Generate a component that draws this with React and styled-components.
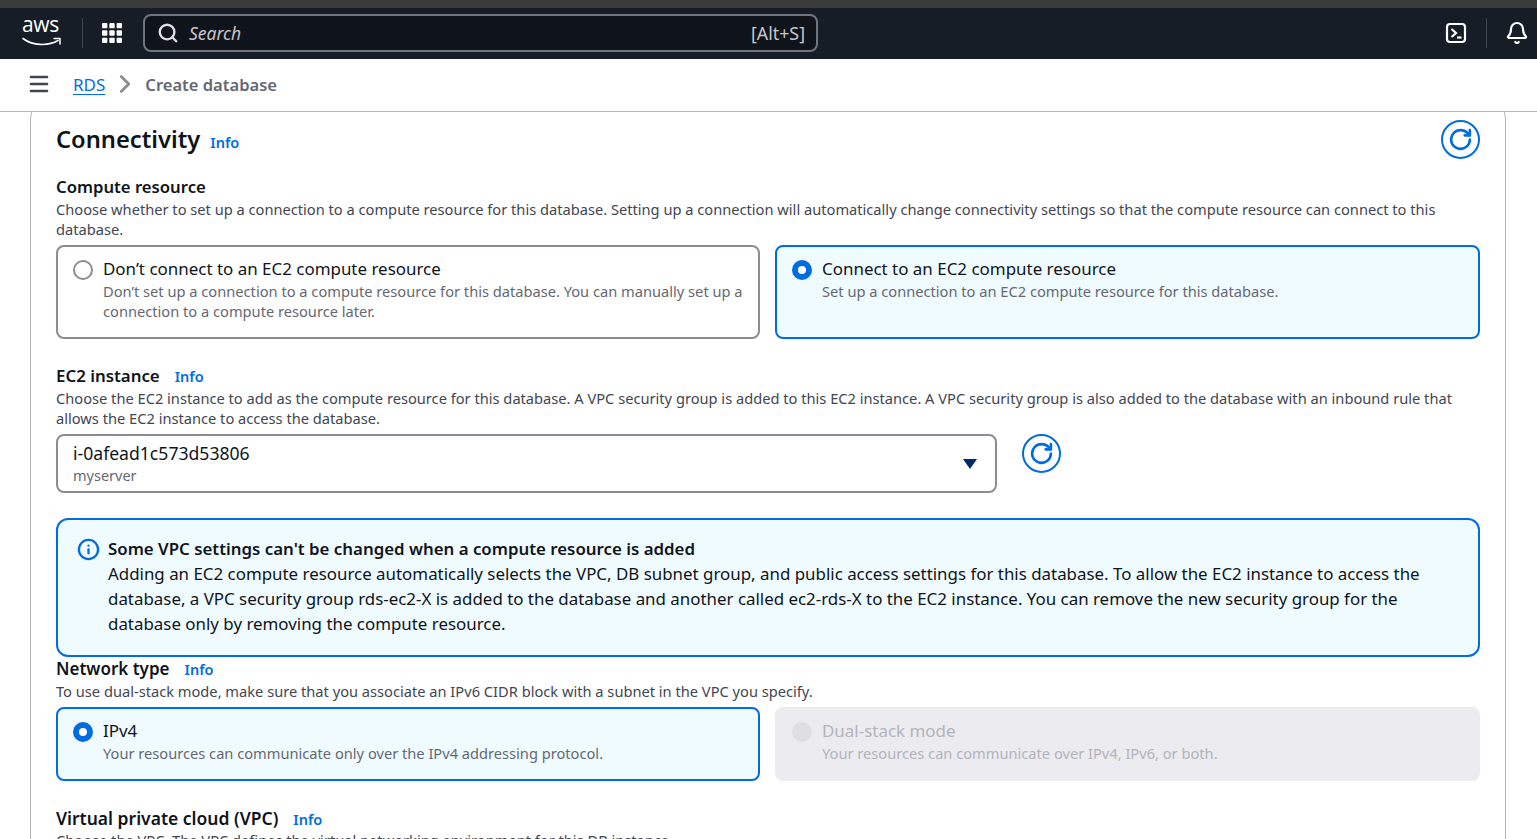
import React from "react";
import styled, { createGlobalStyle } from "styled-components";
import { Search, Menu, ChevronRight, RotateCw, Bell, Info } from "lucide-react";

const GlobalStyle = createGlobalStyle`
    html, body {
        margin: 0;
        padding: 0;
        height: 100%;
        overflow: hidden;
        background: #ffffff;
        font-family: "Noto Sans", "Open Sans", sans-serif;
        color: #0f141a;
    }
    * {
        box-sizing: border-box;
    }
`;

const Page = styled.div`
    height: 839px;
    display: flex;
    flex-direction: column;
    overflow: hidden;
`;

const TopStrip = styled.div`
    height: 8px;
    background: #3b3b3c;
    flex-shrink: 0;
`;

const Nav = styled.header`
    height: 51px;
    flex-shrink: 0;
    background: #161d26;
    display: flex;
    align-items: center;
    padding: 0 8px 2px 22px;
`;

const LogoBox = styled.div`
    width: 39px;
    height: 32px;
    position: relative;
    flex-shrink: 0;
`;

const LogoText = styled.span`
    display: block;
    color: #ffffff;
    font-family: "Open Sans", sans-serif;
    font-size: 21px;
    line-height: 21px;
    letter-spacing: -0.4px;
    margin-top: -3px;
`;

const LogoSmile = styled.svg`
    position: absolute;
    left: 0;
    top: 20px;
`;

const NavDivider = styled.div`
    width: 1px;
    height: 30px;
    background: #424650;
    flex-shrink: 0;
    margin: ${({ $margin }) => $margin};
`;

const GridIcon = styled.svg`
    flex-shrink: 0;
    margin-right: 21px;
`;

const SearchBox = styled.div`
    width: 675px;
    height: 38px;
    border: 2px solid #72747e;
    border-radius: 8px;
    background: #0f141a;
    display: flex;
    align-items: center;
    padding: 0 11px 0 12px;
    color: #c6c6cd;
    font-size: 17.5px;
    gap: 10px;
`;

const SearchHint = styled.span`
    font-style: italic;
    flex: 1;
`;

const SearchKeys = styled.span`
    font-size: 17.8px;
`;

const NavRight = styled.div`
    margin-left: auto;
    display: flex;
    align-items: center;
`;

const Crumbs = styled.div`
    height: 53px;
    flex-shrink: 0;
    background: #ffffff;
    border-bottom: 1px solid #b4b4bb;
    display: flex;
    align-items: center;
    padding: 0 0 2px 27px;
    font-size: 17px;
    position: relative;
    z-index: 1;
    color: #424650;
`;

const CrumbLink = styled.a`
    color: #006ce0;
    margin-left: 22px;
    text-decoration: underline;
    text-underline-offset: 3px;
`;

const CrumbCurrent = styled.span`
    color: #656871;
    font-weight: 600;
    font-size: 16.55px;
`;

const CrumbArrow = styled.span`
    display: flex;
    margin: 0 5px;
    color: #8c8c94;
`;

const Main = styled.main`
    flex: 1;
    overflow: hidden;
    padding: 0 31px 0 30px;
`;

const Card = styled.section`
    margin-top: -10px;
    border: 1px solid #b4b4bb;
    border-radius: 16px;
    padding: 0 25px;
    height: 800px;
`;

const TitleRow = styled.div`
    display: flex;
    align-items: center;
    height: 49px;
    margin-top: 12px;
    justify-content: space-between;
`;

const TitleGroup = styled.div`
    display: flex;
    align-items: baseline;
    gap: 10px;
    padding-bottom: 2px;
`;

const Title = styled.h2`
    margin: 0;
    font-size: 23.7px;
    line-height: 30px;
    font-weight: 600;
    color: #0f141a;
`;

const InfoLink = styled.a`
    color: #006ce0;
    font-size: 14.5px;
    font-weight: 600;
    line-height: 20px;
    margin-left: ${({ $gap }) => $gap || "0"};
`;

const RoundButton = styled.button`
    width: 39px;
    height: 39px;
    border: 2px solid #006ce0;
    border-radius: 50%;
    background: #ffffff;
    color: #006ce0;
    display: flex;
    align-items: center;
    justify-content: center;
    padding: 0 1px 0 0;
    flex-shrink: 0;
`;

const Field = styled.div`
    margin-top: ${({ $top }) => $top};
`;

const Label = styled.div`
    font-size: ${({ $size }) => $size || "16.7px"};
    line-height: 22px;
    font-weight: 600;
    color: #0f141a;
`;

const Description = styled.p`
    margin: 1px 0 0;
    font-size: 14.65px;
    line-height: 20px;
    color: #424650;
`;

const TileRow = styled.div`
    display: grid;
    grid-template-columns: 704px 705px;
    gap: 15px;
    margin-top: 6px;
`;

const Tile = styled.div`
    height: ${({ $height }) => $height};
    border-radius: 8px;
    border: 2px solid
        ${({ $state }) =>
            $state === "on" ? "#006ce0" : $state === "off" ? "#8c8c94" : "#ebebf0"};
    background: ${({ $state }) =>
        $state === "on" ? "#f0fbff" : $state === "off" ? "#ffffff" : "#ebebf0"};
    display: flex;
    gap: 10px;
    padding: 11px 15px;
`;

const Radio = styled.span`
    width: 20px;
    height: 20px;
    border-radius: 50%;
    flex-shrink: 0;
    margin-top: 2px;
    border: ${({ $state }) =>
        $state === "on"
            ? "6px solid #006ce0"
            : $state === "off"
              ? "2px solid #8c8c94"
              : "none"};
    background: ${({ $state }) => ($state === "disabled" ? "#dedee3" : "#ffffff")};
`;

const TileTitle = styled.div`
    font-size: 16.95px;
    line-height: 22px;
    color: ${({ $disabled }) => ($disabled ? "#b4b4bb" : "#0f141a")};
`;

const TileText = styled.div`
    font-size: 14.65px;
    line-height: 20px;
    margin-top: 1px;
    color: ${({ $disabled }) => ($disabled ? "#b4b4bb" : "#656871")};
`;

const SelectRow = styled.div`
    display: flex;
    gap: 25px;
    margin-top: 6px;
`;

const Select = styled.div`
    width: 941px;
    height: 59px;
    border: 2px solid #8c8c94;
    border-radius: 8px;
    padding: 5px 15px 0;
    position: relative;
`;

const SelectValue = styled.div`
    font-size: 17.6px;
    line-height: 24px;
    color: #0f141a;
`;

const SelectSub = styled.div`
    font-size: 14.5px;
    line-height: 20px;
    color: #656871;
`;

const Caret = styled.span`
    position: absolute;
    right: 18px;
    top: 23px;
    width: 0;
    height: 0;
    border-left: 7px solid transparent;
    border-right: 7px solid transparent;
    border-top: 10px solid #002a66;
`;

const Alert = styled.div`
    margin-top: 25px;
    height: 139px;
    border: 2px solid #006ce0;
    border-radius: 12px;
    background: #f0fbff;
    display: flex;
    gap: 8px;
    padding: 16px 19px;
    color: #0f141a;
`;

const AlertIcon = styled.span`
    display: flex;
    color: #006ce0;
    margin-top: 2px;
    height: 23px;
`;

const AlertTitle = styled.div`
    font-size: 16.85px;
    line-height: 25px;
    font-weight: 600;
`;

const AlertBody = styled.div`
    font-size: 16.9px;
    line-height: 25px;
`;

function AwsLogo() {
    return (
        <LogoBox>
            <LogoText>aws</LogoText>
            <LogoSmile width="39" height="11" viewBox="0 0 39 11" fill="none">
                <path
                    d="M1 1.5C10 8.5 26 9.5 36 3.5"
                    stroke="#ffffff"
                    strokeWidth="1.6"
                    strokeLinecap="round"
                />
                <path
                    d="M32 1.5H38V7"
                    stroke="#ffffff"
                    strokeWidth="1.5"
                    strokeLinecap="round"
                    strokeLinejoin="round"
                />
            </LogoSmile>
        </LogoBox>
    );
}

function AppsGrid() {
    const cells = [];
    for (let row = 0; row < 3; row++) {
        for (let col = 0; col < 3; col++) {
            cells.push(
                <rect
                    key={`${row}-${col}`}
                    x={col * 7.5}
                    y={row * 7.5}
                    width="5.5"
                    height="5.5"
                    rx="1"
                    fill="#ffffff"
                />,
            );
        }
    }
    return (
        <GridIcon width="20" height="20" viewBox="0 0 20.5 20.5">
            {cells}
        </GridIcon>
    );
}

function ShellIcon() {
    return (
        <svg width="22" height="22" viewBox="0 0 22 22" fill="none" stroke="#ffffff">
            <rect x="2" y="2" width="18" height="18" rx="3" strokeWidth="2.2" />
            <path d="M6.5 7L11 11L6.5 15" strokeWidth="2.2" />
            <path d="M12 15.5H16.5" strokeWidth="2.2" />
        </svg>
    );
}

function App() {
    return (
        <>
            <GlobalStyle />
            <Page>
                <TopStrip />
                <Nav>
                    <AwsLogo />
                    <NavDivider $margin="0 19px 0 21px" />
                    <AppsGrid />
                    <SearchBox>
                        <Search size={22} strokeWidth={2.6} color="#dedee3" />
                        <SearchHint>Search</SearchHint>
                        <SearchKeys>[Alt+S]</SearchKeys>
                    </SearchBox>
                    <NavRight>
                        <ShellIcon />
                        <NavDivider $margin="0 18px 0 19px" />
                        <Bell size={24} strokeWidth={2.2} color="#ffffff" />
                    </NavRight>
                </Nav>
                <Crumbs>
                    <Menu size={24} strokeWidth={2.6} color="#424650" />
                    <CrumbLink>RDS</CrumbLink>
                    <CrumbArrow>
                        <ChevronRight size={30} strokeWidth={2.2} />
                    </CrumbArrow>
                    <CrumbCurrent>Create database</CrumbCurrent>
                </Crumbs>
                <Main>
                    <Card>
                        <TitleRow>
                            <TitleGroup>
                                <Title>Connectivity</Title>
                                <InfoLink>Info</InfoLink>
                            </TitleGroup>
                            <RoundButton>
                                <RotateCw size={25} strokeWidth={2.5} />
                            </RoundButton>
                        </TitleRow>

                        <Field $top="12px">
                            <Label>Compute resource</Label>
                            <Description>
                                Choose whether to set up a connection to a compute resource for this
                                database. Setting up a connection will automatically change
                                connectivity settings so that the compute resource can connect to
                                this database.
                            </Description>
                            <TileRow>
                                <Tile $state="off" $height="94px">
                                    <Radio $state="off" />
                                    <div>
                                        <TileTitle>Don’t connect to an EC2 compute resource</TileTitle>
                                        <TileText>
                                            Don’t set up a connection to a compute resource for this
                                            database. You can manually set up a connection to a
                                            compute resource later.
                                        </TileText>
                                    </div>
                                </Tile>
                                <Tile $state="on" $height="94px">
                                    <Radio $state="on" />
                                    <div>
                                        <TileTitle>Connect to an EC2 compute resource</TileTitle>
                                        <TileText>
                                            Set up a connection to an EC2 compute resource for this
                                            database.
                                        </TileText>
                                    </div>
                                </Tile>
                            </TileRow>
                        </Field>

                        <Field $top="26px">
                            <Label $size="16.85px">
                                EC2 instance
                                <InfoLink $gap="15px">Info</InfoLink>
                            </Label>
                            <Description>
                                Choose the EC2 instance to add as the compute resource for this
                                database. A VPC security group is added to this EC2 instance. A VPC
                                security group is also added to the database with an inbound rule
                                that allows the EC2 instance to access the database.
                            </Description>
                            <SelectRow>
                                <Select>
                                    <SelectValue>i-0afead1c573d53806</SelectValue>
                                    <SelectSub>myserver</SelectSub>
                                    <Caret />
                                </Select>
                                <RoundButton>
                                    <RotateCw size={25} strokeWidth={2.5} />
                                </RoundButton>
                            </SelectRow>
                        </Field>

                        <Alert>
                            <AlertIcon>
                                <Info size={23} strokeWidth={2.4} />
                            </AlertIcon>
                            <div>
                                <AlertTitle>
                                    Some VPC settings can't be changed when a compute resource is added
                                </AlertTitle>
                                <AlertBody>
                                    Adding an EC2 compute resource automatically selects the VPC, DB
                                    subnet group, and public access settings for this database. To
                                    allow the EC2 instance to access the database, a VPC security
                                    group rds-ec2-X is added to the database and another called
                                    ec2-rds-X to the EC2 instance. You can remove the new security
                                    group for the database only by removing the compute resource.
                                </AlertBody>
                            </div>
                        </Alert>

                        <Field $top="1px">
                            <Label $size="17px">
                                Network type
                                <InfoLink $gap="15px">Info</InfoLink>
                            </Label>
                            <Description>
                                To use dual-stack mode, make sure that you associate an IPv6 CIDR
                                block with a subnet in the VPC you specify.
                            </Description>
                            <TileRow>
                                <Tile $state="on" $height="74px">
                                    <Radio $state="on" />
                                    <div>
                                        <TileTitle>IPv4</TileTitle>
                                        <TileText>
                                            Your resources can communicate only over the IPv4
                                            addressing protocol.
                                        </TileText>
                                    </div>
                                </Tile>
                                <Tile $state="disabled" $height="74px">
                                    <Radio $state="disabled" />
                                    <div>
                                        <TileTitle $disabled>Dual-stack mode</TileTitle>
                                        <TileText $disabled>
                                            Your resources can communicate over IPv4, IPv6, or both.
                                        </TileText>
                                    </div>
                                </Tile>
                            </TileRow>
                        </Field>

                        <Field $top="26px">
                            <Label $size="17.5px">
                                Virtual private cloud (VPC)
                                <InfoLink $gap="15px">Info</InfoLink>
                            </Label>
                            <Description>
                                Choose the VPC. The VPC defines the virtual networking environment
                                for this DB instance.
                            </Description>
                        </Field>
                    </Card>
                </Main>
            </Page>
        </>
    );
}

export default App;
